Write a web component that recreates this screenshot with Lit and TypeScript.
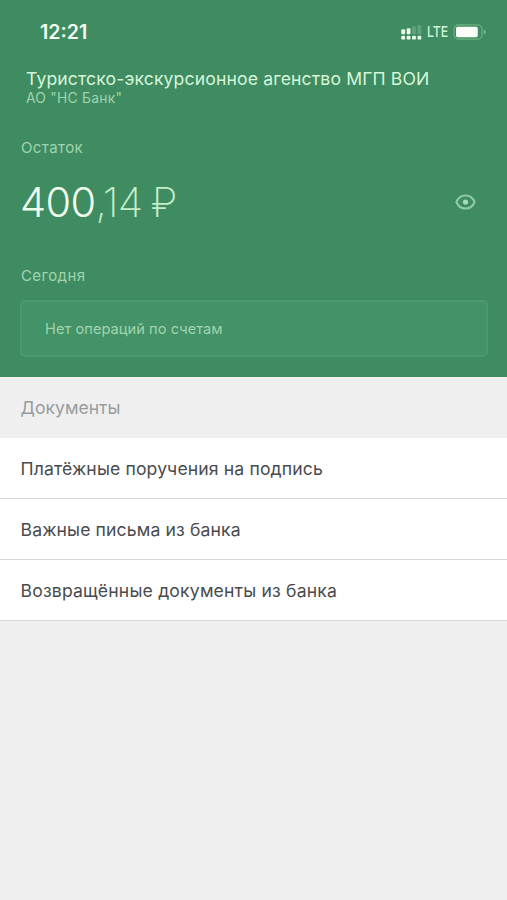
import { LitElement, html, css, svg } from "lit";
import { customElement } from "lit/decorators.js";

const DOCUMENTS = [
  "Платёжные поручения на подпись",
  "Важные письма из банка",
  "Возвращённые документы из банка",
];

@customElement("status-bar")
class StatusBar extends LitElement {
  static styles = css`
    :host { display: flex; align-items: center; height: 22px; padding: 21px 20px 0 40px; color: #f4fff2; }
    .time { font-size: 19.6px; font-weight: 600; flex: 1; }
    .signal { margin-right: 5px; margin-top: 2px; }
    .net { font-size: 15px; font-weight: 500; line-height: 22px; width: 21px; margin-right: 5px; color: #d3f2d6; }
    .net span { display: block; transform: scaleX(.82); transform-origin: left; }
    svg { display: block; }
  `;
  render() {
    return html`
      <span class="time">12:21</span>
      <svg class="signal" width="21" height="16" viewBox="0 0 21 16" fill="#e9fbe8">
        <rect x="0.3" y="4.2" width="3.8" height="5" rx="1" />
        <rect x="5.7" y="3.2" width="3.8" height="6" rx="1" />
        <rect x="11.1" y="1.2" width="3.8" height="8" rx="1" opacity=".2" />
        <rect x="16.5" y="0" width="3.8" height="9.2" rx="1" opacity=".2" />
        ${[0.3, 5.7, 11.1, 16.5].map((x) => svg`<rect x=${x} y="10.8" width="3.8" height="3.8" rx="1.2" />`)}
      </svg>
      <span class="net"><span>LTE</span></span>
      <svg width="34" height="16" viewBox="0 0 34 16">
        <rect x="1" y="0.9" width="28" height="14.2" rx="4.4" fill="none" stroke="#6db085" stroke-width="1.2" />
        <rect x="3" y="2.8" width="21.8" height="10.4" rx="1.8" fill="#fbfff8" />
        <path d="M30.8 5.4v5.2c1.4-.5 1.9-1.5 1.9-2.6s-.5-2.1-1.9-2.6z" fill="#7dbb93" />
      </svg>
    `;
  }
}

@customElement("app-root")
class AppRoot extends LitElement {
  static styles = css`
    :host { display: block; min-height: 900px; background: #efefef; font-family: Inter, "Noto Sans", sans-serif; font-weight: 400; }
    .head { box-sizing: border-box; height: 377px; background: #3f8c62; color: #9fd5ad; overflow: hidden; }
    .line { white-space: nowrap; }
    .title { margin: 24px 0 0 26px; font-size: 17.6px; letter-spacing: .13px; line-height: 24px; color: #d6f5d8; }
    .bank { margin: -1px 0 1px 26px; font-size: 13.8px; letter-spacing: .28px; line-height: 16px; color: #9fd5ad; }
    .label { margin-left: 21px; font-size: 15px; line-height: 20px; letter-spacing: .4px; }
    .balance-label { margin-top: 32px; }
    .balance { display: flex; align-items: center; height: 50px; margin: 19px 31px 0 20px; }
    .sum { flex: 1; font-size: 41.5px; line-height: 50px; font-weight: 200; color: #c4edc9; }
    .whole { font-weight: 300; color: #effdec; letter-spacing: -.6px; }
    .cents { letter-spacing: -.8px; word-spacing: -2.2px; }
    .today-label { margin-top: 39px; }
    .empty { box-sizing: border-box; height: 57px; margin: 14px 19px 0 20px; padding-left: 23px; border: 2px solid #4c996e; border-radius: 5px; background: #449267; font-size: 14.6px; letter-spacing: .05px; line-height: 54px; }
    .section { height: 61px; padding-left: 20.5px; font-size: 17.6px; line-height: 61px; color: #9a9d9f; }
    .row { box-sizing: border-box; height: 61px; padding-left: 20.5px; border-bottom: 1px solid #d6d8d8; background: #fff; color: #494b4d; font-size: 17.6px; letter-spacing: .13px; line-height: 62px; }
    .row:last-of-type { letter-spacing: .18px; }
    svg { display: block; }
  `;
  render() {
    return html`
      <header class="head">
        <status-bar></status-bar>
        <div class="title line">Туристско-экскурсионное агенство МГП ВОИ</div>
        <div class="bank line">АО "НС Банк"</div>
        <div class="label balance-label">Остаток</div>
        <div class="balance">
          <div class="sum line"><span class="whole">400</span><span class="cents">,14 ₽</span></div>
          <svg width="21" height="16" viewBox="0 0 21 16">
            <path d="M1.4 8C3.2 3.6 6.4 1.5 10.5 1.5S17.8 3.6 19.6 8c-1.8 4.4-5 6.5-9.1 6.5S3.2 12.4 1.4 8z" fill="none" stroke="#8fcba2" stroke-width="2.1" stroke-linejoin="round" />
            <circle cx="10.5" cy="8" r="2.6" fill="#a6dcb3" />
          </svg>
        </div>
        <div class="label today-label">Сегодня</div>
        <div class="empty line">Нет операций по счетам</div>
      </header>
      <div class="section">Документы</div>
      ${DOCUMENTS.map((name) => html`<div class="row line">${name}</div>`)}
    `;
  }
}
